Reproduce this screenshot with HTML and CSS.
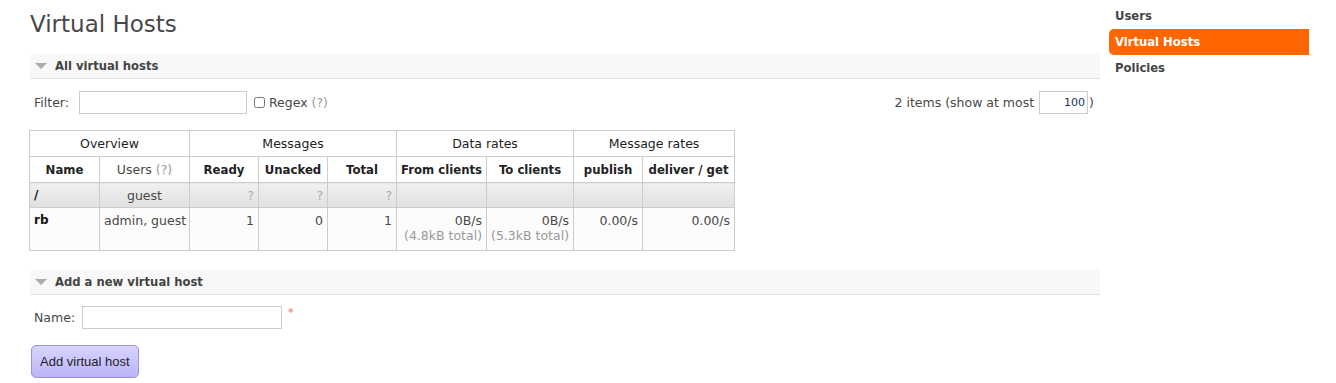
FILE: index.html
```html
<!DOCTYPE html>
<html>
<head>
  <title>Virtual Hosts</title>
  <link rel="stylesheet" href="styles.css">
</head>
<body>
  <div class="page">
    <div class="main">
      <h1>Virtual Hosts</h1>

      <div class="section">
        <h2><span class="arrow"></span>All virtual hosts</h2>
        <div class="filter-row">
          <div class="filter">
            <label for="filter">Filter:</label>
            <input type="text" id="filter" class="filter-input" />
            <input type="checkbox" id="regex" class="check" />
            <label for="regex">Regex <span class="help">(?)</span></label>
          </div>
          <div class="count">
            2 items (show at most <input type="text" class="count-input" value="100" />)
          </div>
        </div>

        <table class="list">
          <colgroup>
            <col class="w70">
            <col class="w90">
            <col class="w69">
            <col class="w69">
            <col class="w69">
            <col class="w90">
            <col class="w87">
            <col class="w69">
            <col class="w92">
          </colgroup>
          <thead>
            <tr class="group">
              <th colspan="2">Overview</th>
              <th colspan="3">Messages</th>
              <th colspan="2">Data rates</th>
              <th colspan="2">Message rates</th>
            </tr>
            <tr class="cols">
              <th>Name</th>
              <th class="plain">Users <span class="help">(?)</span></th>
              <th>Ready</th>
              <th>Unacked</th>
              <th>Total</th>
              <th>From clients</th>
              <th>To clients</th>
              <th>publish</th>
              <th>deliver / get</th>
            </tr>
          </thead>
          <tbody>
            <tr class="alt">
              <td class="name">/</td>
              <td class="mid">guest</td>
              <td class="num help">?</td>
              <td class="num help">?</td>
              <td class="num help">?</td>
              <td></td>
              <td></td>
              <td></td>
              <td></td>
            </tr>
            <tr>
              <td class="name">rb</td>
              <td class="mid">admin, guest</td>
              <td class="num">1</td>
              <td class="num">0</td>
              <td class="num">1</td>
              <td class="num">0B/s<br><span class="help">(4.8kB total)</span></td>
              <td class="num">0B/s<br><span class="help">(5.3kB total)</span></td>
              <td class="num">0.00/s</td>
              <td class="num">0.00/s</td>
            </tr>
          </tbody>
        </table>
      </div>

      <div class="section">
        <h2><span class="arrow"></span>Add a new virtual host</h2>
        <div class="form-row">
          <label for="name">Name:</label>
          <input type="text" id="name" class="name-input" />
          <span class="req">*</span>
        </div>
        <button class="add">Add virtual host</button>
      </div>
    </div>

    <ul class="nav">
      <li>Users</li>
      <li class="selected">Virtual Hosts</li>
      <li>Policies</li>
    </ul>
  </div>
</body>
</html>
```

FILE: styles.css
```css
body {
  margin: 0;
  font-family: "DejaVu Sans", Verdana, sans-serif;
  font-size: 12.5px;
  color: #484848;
  background-color: #fff;
}
.page {
  display: flex;
}
.main {
  width: 1070px;
  margin-left: 30px;
}
h1 {
  font-size: 23px;
  font-weight: normal;
  margin: 0;
  padding-top: 10px;
  height: 44px;
  line-height: 28px;
}
.section h2 {
  display: flex;
  align-items: center;
  height: 24px;
  margin: 0;
  font-size: 11.6px;
  color: #444;
  background-color: #f8f8f8;
  border-bottom: 1px solid #e4e4e4;
}
.arrow {
  width: 0;
  height: 0;
  margin: 0 8px 0 5px;
  border-left: 6px solid transparent;
  border-right: 6px solid transparent;
  border-top: 6px solid #aaa;
}
.filter-row {
  display: flex;
  justify-content: space-between;
  align-items: center;
  margin-top: 12px;
  padding: 0 6px 0 4px;
}
.filter, .count {
  display: flex;
  align-items: center;
}
.filter-input {
  width: 168px;
  height: 23px;
  box-sizing: border-box;
  margin: 0 7px 0 10px;
  border: 1px solid #ccc;
}
.check {
  width: 11px;
  height: 11px;
  margin: 0 4px 0 0;
}
.help {
  color: #999;
}
.count-input {
  width: 49px;
  height: 23px;
  box-sizing: border-box;
  margin: 0 1px 0 5px;
  border: 1px solid #ccc;
  text-align: right;
  font-family: "DejaVu Sans", sans-serif;
  font-size: 11px;
  color: #236;
}
table.list {
  border-collapse: collapse;
  table-layout: fixed;
  width: 706px;
  margin: 16px 0 0 -1px;
  border: 1px solid #ccc;
}
.w70 { width: 70px; }
.w90 { width: 90px; }
.w69 { width: 69px; }
.w87 { width: 87px; }
.w92 { width: 92px; }
.list th, .list td {
  border: 1px solid #ccc;
  padding: 0 4px;
  white-space: nowrap;
  overflow: hidden;
}
.list th {
  height: 25px;
  font-weight: normal;
  color: #222;
}
.list .cols th {
  font-weight: bold;
  font-size: 11.7px;
}
.list .cols th.plain {
  font-weight: normal;
  font-size: 12.5px;
  color: #484848;
}
.list td {
  vertical-align: top;
  padding-top: 5px;
  color: #484848;
}
.list tr.alt td {
  height: 19px;
  background: linear-gradient(#f0f0f0, #e0e0e0);
}
.list tbody tr:last-child td {
  height: 37px;
  background-color: #fcfcfc;
}
.list td.name {
  font-weight: bold;
  font-size: 12px;
  color: #111;
}
.list td.mid {
  text-align: center;
}
.list td.num {
  text-align: right;
}
.list td.help {
  color: #aaa;
}
.section + .section {
  margin-top: 19px;
}
.form-row {
  display: flex;
  align-items: center;
  margin-top: 11px;
  padding-left: 4px;
}
.name-input {
  width: 200px;
  height: 23px;
  box-sizing: border-box;
  margin: 0 6px 0 7px;
  border: 1px solid #ccc;
}
.req {
  color: #f66;
  font-size: 11px;
  align-self: flex-start;
}
.add {
  margin: 16px 0 0 1px;
  height: 33px;
  padding: 0 8px;
  font-family: "Liberation Sans", Arial, sans-serif;
  font-size: 13px;
  color: #222;
  background: linear-gradient(#d8d4ff, #bcb4f8);
  border: 1px solid #9a94d8;
  border-radius: 5px;
}
.nav {
  list-style: none;
  margin: 3px 0 0 9px;
  padding: 0;
  width: 200px;
}
.nav li {
  height: 26px;
  line-height: 26px;
  padding-left: 6px;
  font-weight: bold;
  font-size: 11.6px;
  color: #444;
}
.nav li.selected {
  background-color: #f60;
  color: #fff;
  border-radius: 5px 0 0 5px;
}
```
